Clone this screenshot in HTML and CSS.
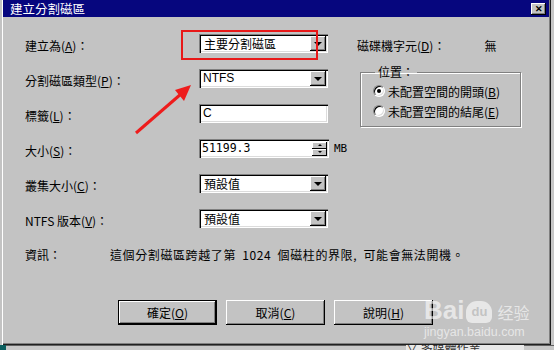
FILE: index.html
```html
<!DOCTYPE html>
<html lang="zh-Hant">
<head>
    <meta charset="UTF-8">
    <meta name="viewport" content="width=device-width, initial-scale=1.0">
    <title>建立分割磁區</title>
    <link rel="stylesheet" href="styles.css">
</head>
<body>
    <div class="dialog">
        <div class="titlebar">
            <span class="title">建立分割磁區</span>
            <span class="close">✕</span>
        </div>
        <div class="content">
            <div class="form">
                <label class="lbl">建立為(<u>A</u>)：</label>
                <div class="combo"><span class="val">主要分割磁區</span><span class="drop"></span></div>
                <div class="drive"><span>磁碟機字元(<u>D</u>)：</span><span class="none">無</span></div>

                <label class="lbl">分割磁區類型(<u>P</u>)：</label>
                <div class="combo"><span class="val latin">NTFS</span><span class="drop"></span></div>
                <fieldset class="position">
                    <legend>位置：</legend>
                    <div class="radio"><span class="dot checked"></span>未配置空間的開頭(<u>B</u>)</div>
                    <div class="radio"><span class="dot"></span>未配置空間的結尾(<u>E</u>)</div>
                </fieldset>

                <label class="lbl">標籤(<u>L</u>)：</label>
                <div class="field"><span class="val latin">C</span></div>

                <label class="lbl">大小(<u>S</u>)：</label>
                <div class="size">
                    <div class="field spin"><span class="val mono">51199.3</span>
                        <span class="spinner"><span class="up"></span><span class="down"></span></span>
                    </div>
                    <span class="unit">MB</span>
                </div>

                <label class="lbl">叢集大小(<u>C</u>)：</label>
                <div class="combo"><span class="val">預設值</span><span class="drop"></span></div>

                <label class="lbl">NTFS 版本(<u>V</u>)：</label>
                <div class="combo"><span class="val">預設值</span><span class="drop"></span></div>
            </div>

            <div class="info">
                <span class="info-label">資訊：</span>
                <span class="info-text">這個分割磁區跨越了第 1024 個磁柱的界限, 可能會無法開機。</span>
            </div>

            <div class="buttons">
                <button class="btn default">確定(<u>O</u>)</button>
                <button class="btn">取消(<u>C</u>)</button>
                <button class="btn">說明(<u>H</u>)</button>
            </div>
        </div>
    </div>
    <div class="below">
        <span class="teal"></span>
        <span class="behind">∨ 多媒體作業</span>
    </div>

    <!-- annotation overlays -->
    <div class="mark"></div>
    <svg class="arrow" width="554" height="350" viewBox="0 0 554 350">
        <line x1="136" y1="133" x2="181" y2="94" stroke="#ee1c1c" stroke-width="3"/>
        <polygon points="191,85 175,90 184,101" fill="#ee1c1c"/>
    </svg>
    <div class="watermark">
        <div class="wm-top"><span class="bai">Bai</span><span class="paw">du</span><span class="jy">经验</span></div>
        <div class="wm-url">jingyan.baidu.com</div>
    </div>
</body>
</html>
```

FILE: styles.css
```css
body {
    margin: 0;
    width: 554px;
    height: 350px;
    overflow: hidden;
    position: relative;
    background: #c8c8c8;
    font-family: "Noto Sans CJK TC", "Liberation Sans", sans-serif;
    font-size: 12px;
    color: #000;
}
u {
    text-decoration: underline;
}
.dialog {
    width: 551px;
    height: 345px;
    background: #c3c3c3;
    box-shadow: inset 2px 0 0 #c3c3c3, inset 3px 0 0 #fff, inset -1px -1px 0 #202020, inset -2px -2px 0 #808080;
}
.titlebar {
    height: 17px;
    margin: 0 2px 0 3px;
    background: #06067e;
    color: #fff;
    display: flex;
    align-items: center;
    justify-content: space-between;
    padding: 0 3px 0 7px;
}
.title {
    font-size: 12.5px;
    line-height: 17px;
}
.close {
    width: 15px;
    height: 12px;
    background: #c3c3c3;
    color: #000;
    font-size: 9px;
    font-weight: bold;
    line-height: 12px;
    text-align: center;
    box-shadow: inset -1px -1px 0 #000, inset 1px 1px 0 #fff, inset -2px -2px 0 #808080;
}
.content {
    padding: 9px 0 0 25px;
}
.form {
    display: grid;
    grid-template-columns: 174px 129px 1fr;
    grid-template-rows: repeat(6, 35px);
    align-items: center;
}
.lbl {
    grid-column: 1;
    padding-top: 3px;
}
.val {
    padding-left: 5px;
    line-height: 17px;
    white-space: nowrap;
}
.latin {
    font-family: "Liberation Sans", sans-serif;
    font-size: 12px;
    padding-left: 4px;
}
.mono {
    font-family: "DejaVu Sans Mono", monospace;
    font-size: 11.5px;
    padding-left: 3px;
}
.combo, .field {
    grid-column: 2;
    height: 19px;
    box-sizing: border-box;
    background: #fff;
    display: flex;
    align-items: center;
    justify-content: space-between;
    box-shadow: inset 1px 1px 0 #808080, inset 2px 2px 0 #000, inset -1px -1px 0 #fff, inset -2px -2px 0 #dcdcdc;
}
.drop {
    width: 16px;
    height: 15px;
    margin-right: 2px;
    background: #c3c3c3;
    box-shadow: inset -1px -1px 0 #000, inset 1px 1px 0 #fff, inset -2px -2px 0 #808080;
    position: relative;
}
.drop::after {
    content: "";
    position: absolute;
    left: 4px;
    top: 6px;
    border-left: 4px solid transparent;
    border-right: 4px solid transparent;
    border-top: 4px solid #000;
}
.drive {
    grid-column: 3;
    display: flex;
    padding: 3px 0 0 29px;
}
.none {
    margin-left: 39px;
}
.position {
    grid-row: 2 / span 2;
    grid-column: 3;
    align-self: start;
    margin: 5px 0 0 32px;
    width: 161px;
    height: 61px;
    box-sizing: border-box;
    padding: 0 0 0 12px;
    border: 1px solid #808080;
    box-shadow: 1px 1px 0 #fff, inset 1px 1px 0 #fff;
}
.position legend {
    padding: 0 3px;
    margin-left: 2px;
    line-height: 12px;
}
.radio {
    display: flex;
    align-items: center;
    height: 20px;
    white-space: nowrap;
}
.radio:first-of-type {
    margin-top: 3px;
}
.dot {
    width: 12px;
    height: 12px;
    border-radius: 50%;
    background: #fff;
    margin-right: 3px;
    box-sizing: border-box;
    border: 1px solid;
    border-color: #808080 #fff #fff #808080;
    box-shadow: inset 1px 1px 0 #000, inset -1px -1px 0 #dcdcdc;
    position: relative;
}
.dot.checked::after {
    content: "";
    position: absolute;
    left: 3px;
    top: 3px;
    width: 4px;
    height: 4px;
    border-radius: 50%;
    background: #000;
}
.size {
    grid-column: 2;
    display: flex;
    align-items: center;
}
.spin {
    width: 130px;
    flex-shrink: 0;
}
.spinner {
    display: flex;
    flex-direction: column;
    margin-right: 2px;
}
.up, .down {
    width: 15px;
    height: 7px;
    background: #c3c3c3;
    box-shadow: inset -1px -1px 0 #000, inset 1px 1px 0 #fff;
    position: relative;
}
.up::after, .down::after {
    content: "";
    position: absolute;
    left: 6px;
    top: 2px;
    border-left: 2px solid transparent;
    border-right: 2px solid transparent;
}
.up::after {
    border-bottom: 2px solid #000;
}
.down::after {
    border-top: 2px solid #000;
}
.unit {
    margin-left: 5px;
    font-family: "DejaVu Sans Mono", monospace;
    font-size: 11px;
}
.info {
    display: flex;
    margin-top: 12px;
    line-height: 14px;
}
.info-label {
    width: 85px;
}
.info-text {
    letter-spacing: 0.6px;
    word-spacing: 3px;
}
.buttons {
    display: flex;
    gap: 9px;
    margin: 38px 0 0 93px;
}
.btn {
    width: 99px;
    height: 25px;
    border: none;
    background: #c3c3c3;
    font-family: "Noto Sans CJK TC", "Liberation Sans", sans-serif;
    font-size: 12px;
    padding: 0;
    box-shadow: inset -1px -1px 0 #000, inset 1px 1px 0 #fff, inset -2px -2px 0 #808080;
}
.btn.default {
    box-shadow: inset 0 0 0 1px #000, inset -2px -2px 0 #000, inset 2px 2px 0 #fff, inset -3px -3px 0 #808080;
}
.below {
    height: 5px;
    display: flex;
    background: #c8c8c8;
    box-shadow: inset 0 1px 0 #606060;
    overflow: hidden;
}
.teal {
    width: 6px;
    background: #0b5f5f;
}
.behind {
    margin-left: 400px;
    width: 118px;
    background: #e8e8e8;
    font-size: 12px;
    line-height: 5px;
    color: #333;
    overflow: hidden;
}
.mark {
    position: absolute;
    left: 181px;
    top: 30px;
    width: 133px;
    height: 26px;
    border: 2px solid #e81818;
}
.arrow {
    position: absolute;
    left: 0;
    top: 0;
}
.watermark {
    position: absolute;
    left: 424px;
    top: 289px;
    color: rgba(255, 255, 255, 0.6);
    font-family: "Liberation Sans", sans-serif;
}
.wm-top {
    display: flex;
    align-items: flex-end;
    height: 34px;
}
.bai {
    font-size: 26px;
    font-weight: bold;
    line-height: 26px;
}
.paw {
    width: 26px;
    height: 22px;
    margin-left: 2px;
    border-radius: 11px 11px 6px 6px;
    background: rgba(255, 255, 255, 0.6);
    color: rgba(190, 190, 190, 0.9);
    font-size: 13px;
    font-weight: bold;
    text-align: center;
    line-height: 22px;
}
.jy {
    margin-left: 5px;
    font-family: "Noto Sans CJK SC", sans-serif;
    font-size: 16px;
    line-height: 22px;
}
.wm-url {
    font-size: 12.5px;
    margin-top: 2px;
}
```
